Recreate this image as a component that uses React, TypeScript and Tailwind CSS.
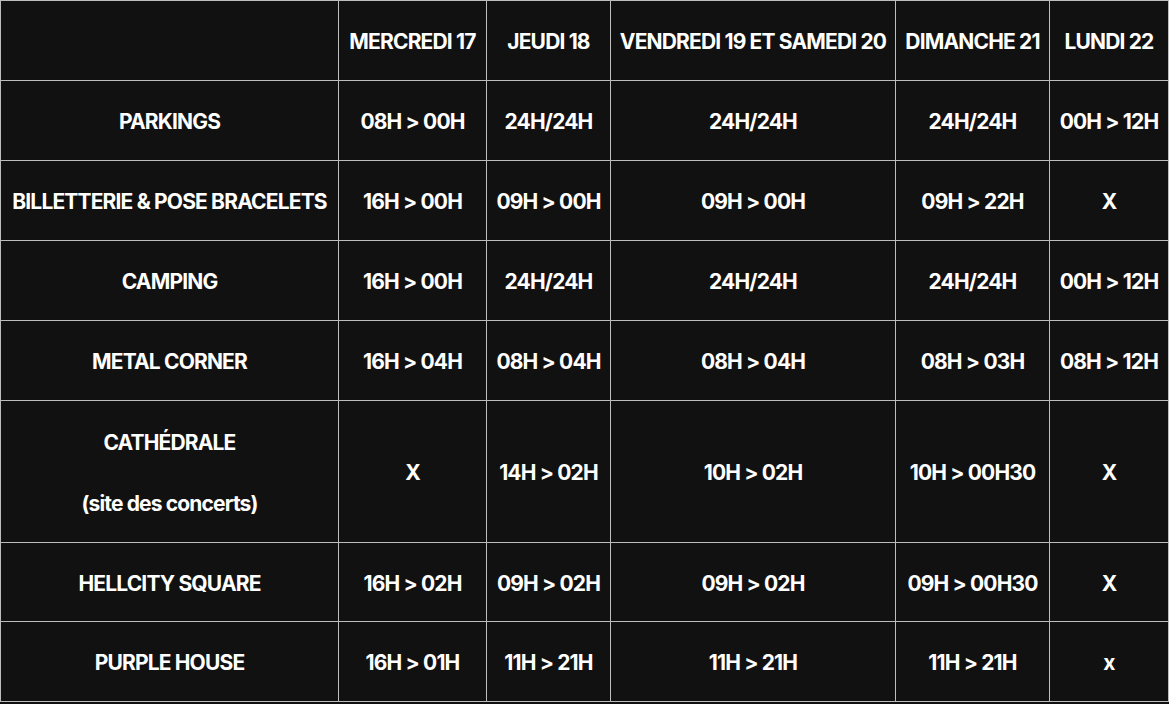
import React from "react";

const days = ["MERCREDI 17", "JEUDI 18", "VENDREDI 19 ET SAMEDI 20", "DIMANCHE 21", "LUNDI 22"];

const rows: { label: React.ReactNode; hours: string[]; h: string }[] = [
  { label: "PARKINGS", hours: ["08H > 00H", "24H/24H", "24H/24H", "24H/24H", "00H > 12H"], h: "h-[80px]" },
  { label: "BILLETTERIE & POSE BRACELETS", hours: ["16H > 00H", "09H > 00H", "09H > 00H", "09H > 22H", "X"], h: "h-[80px]" },
  { label: "CAMPING", hours: ["16H > 00H", "24H/24H", "24H/24H", "24H/24H", "00H > 12H"], h: "h-[80px]" },
  { label: "METAL CORNER", hours: ["16H > 04H", "08H > 04H", "08H > 04H", "08H > 03H", "08H > 12H"], h: "h-[80px]" },
  {
    label: (
      <div className="flex flex-col items-center gap-[30px]">
        <span>CATHÉDRALE</span>
        <span>(site des concerts)</span>
      </div>
    ),
    hours: ["X", "14H > 02H", "10H > 02H", "10H > 00H30", "X"],
    h: "h-[142px]",
  },
  { label: "HELLCITY SQUARE", hours: ["16H > 02H", "09H > 02H", "09H > 02H", "09H > 00H30", "X"], h: "h-[79px]" },
  { label: "PURPLE HOUSE", hours: ["16H > 01H", "11H > 21H", "11H > 21H", "11H > 21H", "x"], h: "h-[80px]" },
];

function Cell({ children, h }: { children?: React.ReactNode; h: string }) {
  return (
    <div className={`${h} flex items-center justify-center border-r border-b border-[#bdbdbd] pt-[3px] text-center whitespace-nowrap`}>
      {children}
    </div>
  );
}

export default function App() {
  return (
    <div className="min-h-[704px] w-[1169px] bg-[#111111]">
      <div
        className="grid grid-cols-[338px_148px_124px_285px_154px_119px] border-t border-l border-[#bdbdbd] bg-[#111111] text-[21px] font-bold tracking-[-0.04em] text-white"
        style={{ fontFamily: "Inter, 'Liberation Sans', sans-serif" }}
      >
        <Cell h="h-[80px]" />
        {days.map((d) => (
          <Cell key={d} h="h-[80px]">
            {d}
          </Cell>
        ))}
        {rows.map((r, i) => (
          <React.Fragment key={i}>
            <Cell h={r.h}>{r.label}</Cell>
            {r.hours.map((v, j) => (
              <Cell key={j} h={r.h}>
                {v}
              </Cell>
            ))}
          </React.Fragment>
        ))}
      </div>
    </div>
  );
}
